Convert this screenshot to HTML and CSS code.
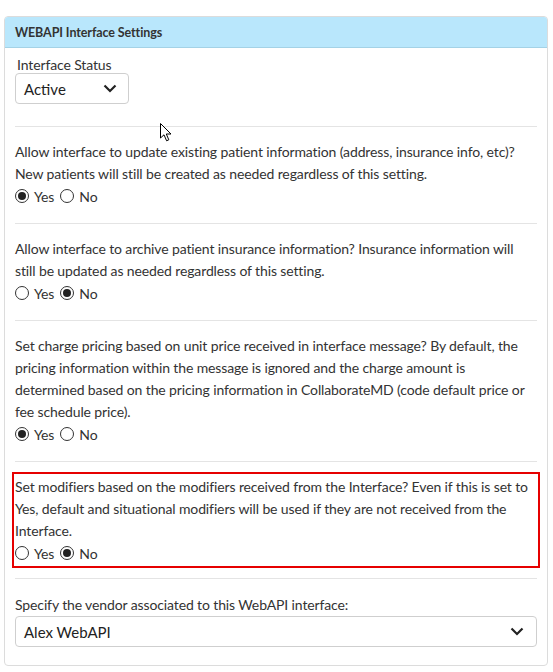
FILE: index.html
```html
<!DOCTYPE html>
<html>
<head>
<meta charset="utf-8">
<link rel="stylesheet" href="styles.css">
</head>
<body>
<div class="panel">
  <div class="panel-header">WEBAPI Interface Settings</div>
  <div class="panel-body">
    <div class="status">
      <div class="label">Interface Status</div>
      <div class="select select-small"><span>Active</span>
        <svg class="chev" width="14" height="9" viewBox="0 0 14 9"><path d="M1.5 1.5 L7 7 L12.5 1.5" fill="none" stroke="#222" stroke-width="2.2"/></svg>
      </div>
    </div>
    <div class="sep sep-first"></div>
    <div class="block">
      <div class="q">Allow interface to update existing patient information (address, insurance info, etc)? New patients will still be created as needed regardless of this setting.</div>
      <div class="radios">
        <label class="opt"><input type="radio" name="r1" checked>Yes</label>
        <label class="opt"><input type="radio" name="r1">No</label>
      </div>
    </div>
    <div class="sep"></div>
    <div class="block">
      <div class="q">Allow interface to archive patient insurance information? Insurance information will still be updated as needed regardless of this setting.</div>
      <div class="radios">
        <label class="opt"><input type="radio" name="r2">Yes</label>
        <label class="opt"><input type="radio" name="r2" checked>No</label>
      </div>
    </div>
    <div class="sep"></div>
    <div class="block">
      <div class="q">Set charge pricing based on unit price received in interface message? By default, the pricing information within the message is ignored and the charge amount is determined based on the pricing information in CollaborateMD (code default price or fee schedule price).</div>
      <div class="radios">
        <label class="opt"><input type="radio" name="r3" checked>Yes</label>
        <label class="opt"><input type="radio" name="r3">No</label>
      </div>
    </div>
    <div class="sep sep-before-hl"></div>
    <div class="block highlight">
      <div class="q">Set modifiers based on the modifiers received from the Interface? Even if this is set to Yes, default and situational modifiers will be used if they are not received from the Interface.</div>
      <div class="radios">
        <label class="opt"><input type="radio" name="r4">Yes</label>
        <label class="opt"><input type="radio" name="r4" checked>No</label>
      </div>
    </div>
    <div class="sep sep-after-hl"></div>
    <div class="vendor">
      <div class="q">Specify the vendor associated to this WebAPI interface:</div>
      <div class="select select-wide"><span>Alex WebAPI</span>
        <svg class="chev" width="14" height="9" viewBox="0 0 14 9"><path d="M1.5 1.5 L7 7 L12.5 1.5" fill="none" stroke="#222" stroke-width="2.2"/></svg>
      </div>
    </div>
  </div>
</div>
<svg class="cursor" width="14" height="20" viewBox="0 0 14 20"><path d="M0.5 0.5 L0.5 15 L4 11.8 L6.6 17.8 L8.8 16.8 L6.3 11 L11 11 Z" fill="#fff" stroke="#000" stroke-width="1" stroke-linejoin="round"/></svg>
</body>
</html>
```
FILE: styles.css
```css
* { box-sizing: border-box; }
body {
  margin: 0;
  background: #fff;
  font-family: Lato, "Liberation Sans", sans-serif;
  color: #333;
  font-size: 14px;
  letter-spacing: -0.12px;
  position: relative;
}
.panel {
  margin: 16px 0 0 4px;
  width: 544px;
  border: 1px solid #dcdcdc;
  border-radius: 4px;
  overflow: hidden;
}
.panel-header {
  height: 31px;
  background: #b9e7fc;
  border-bottom: 1px solid #a4d2e6;
  padding: 0 10px;
  display: flex;
  align-items: center;
  font-weight: bold;
  font-size: 12.5px;
  letter-spacing: -0.1px;
  color: #333;
}
.panel-body {
  padding: 8px 10px 18px 10px;
}
.label {
  line-height: 17px;
  margin-left: 2px;
}
.select {
  display: flex;
  align-items: center;
  justify-content: space-between;
  border: 1px solid #cfcfcf;
  border-radius: 4px;
  color: #222;
  font-size: 15px;
  letter-spacing: 0;
  padding: 0 11px 0 8px;
}
.select-small {
  width: 114px;
  height: 31px;
}
.select-wide {
  height: 31px;
  padding-right: 12px;
}
.sep {
  height: 1px;
  background: #e4e4e4;
  margin: 16px 0 14px;
}
.sep-first { margin-top: 22px; }
.sep-before-hl { margin-bottom: 10px; }
.sep-after-hl { margin: 10px 0 15px; }
.q {
  line-height: 22px;
}
.radios {
  display: flex;
  height: 22px;
  align-items: center;
  gap: 6px;
}
.opt {
  display: flex;
  align-items: center;
}
.opt input {
  appearance: none;
  -webkit-appearance: none;
  width: 14px;
  height: 14px;
  margin: 0 5px 0 0;
  border: 1px solid #333;
  border-radius: 50%;
  background: #fff;
  display: grid;
  place-items: center;
}
.opt input:checked::after {
  content: "";
  width: 8px;
  height: 8px;
  border-radius: 50%;
  background: #222;
}
.highlight {
  border: 2px solid #e60000;
  margin: 0 -3px 0 -3px;
  padding: 2px 0 2px 1px;
}
.cursor {
  position: absolute;
  left: 160px;
  top: 123px;
}
```
